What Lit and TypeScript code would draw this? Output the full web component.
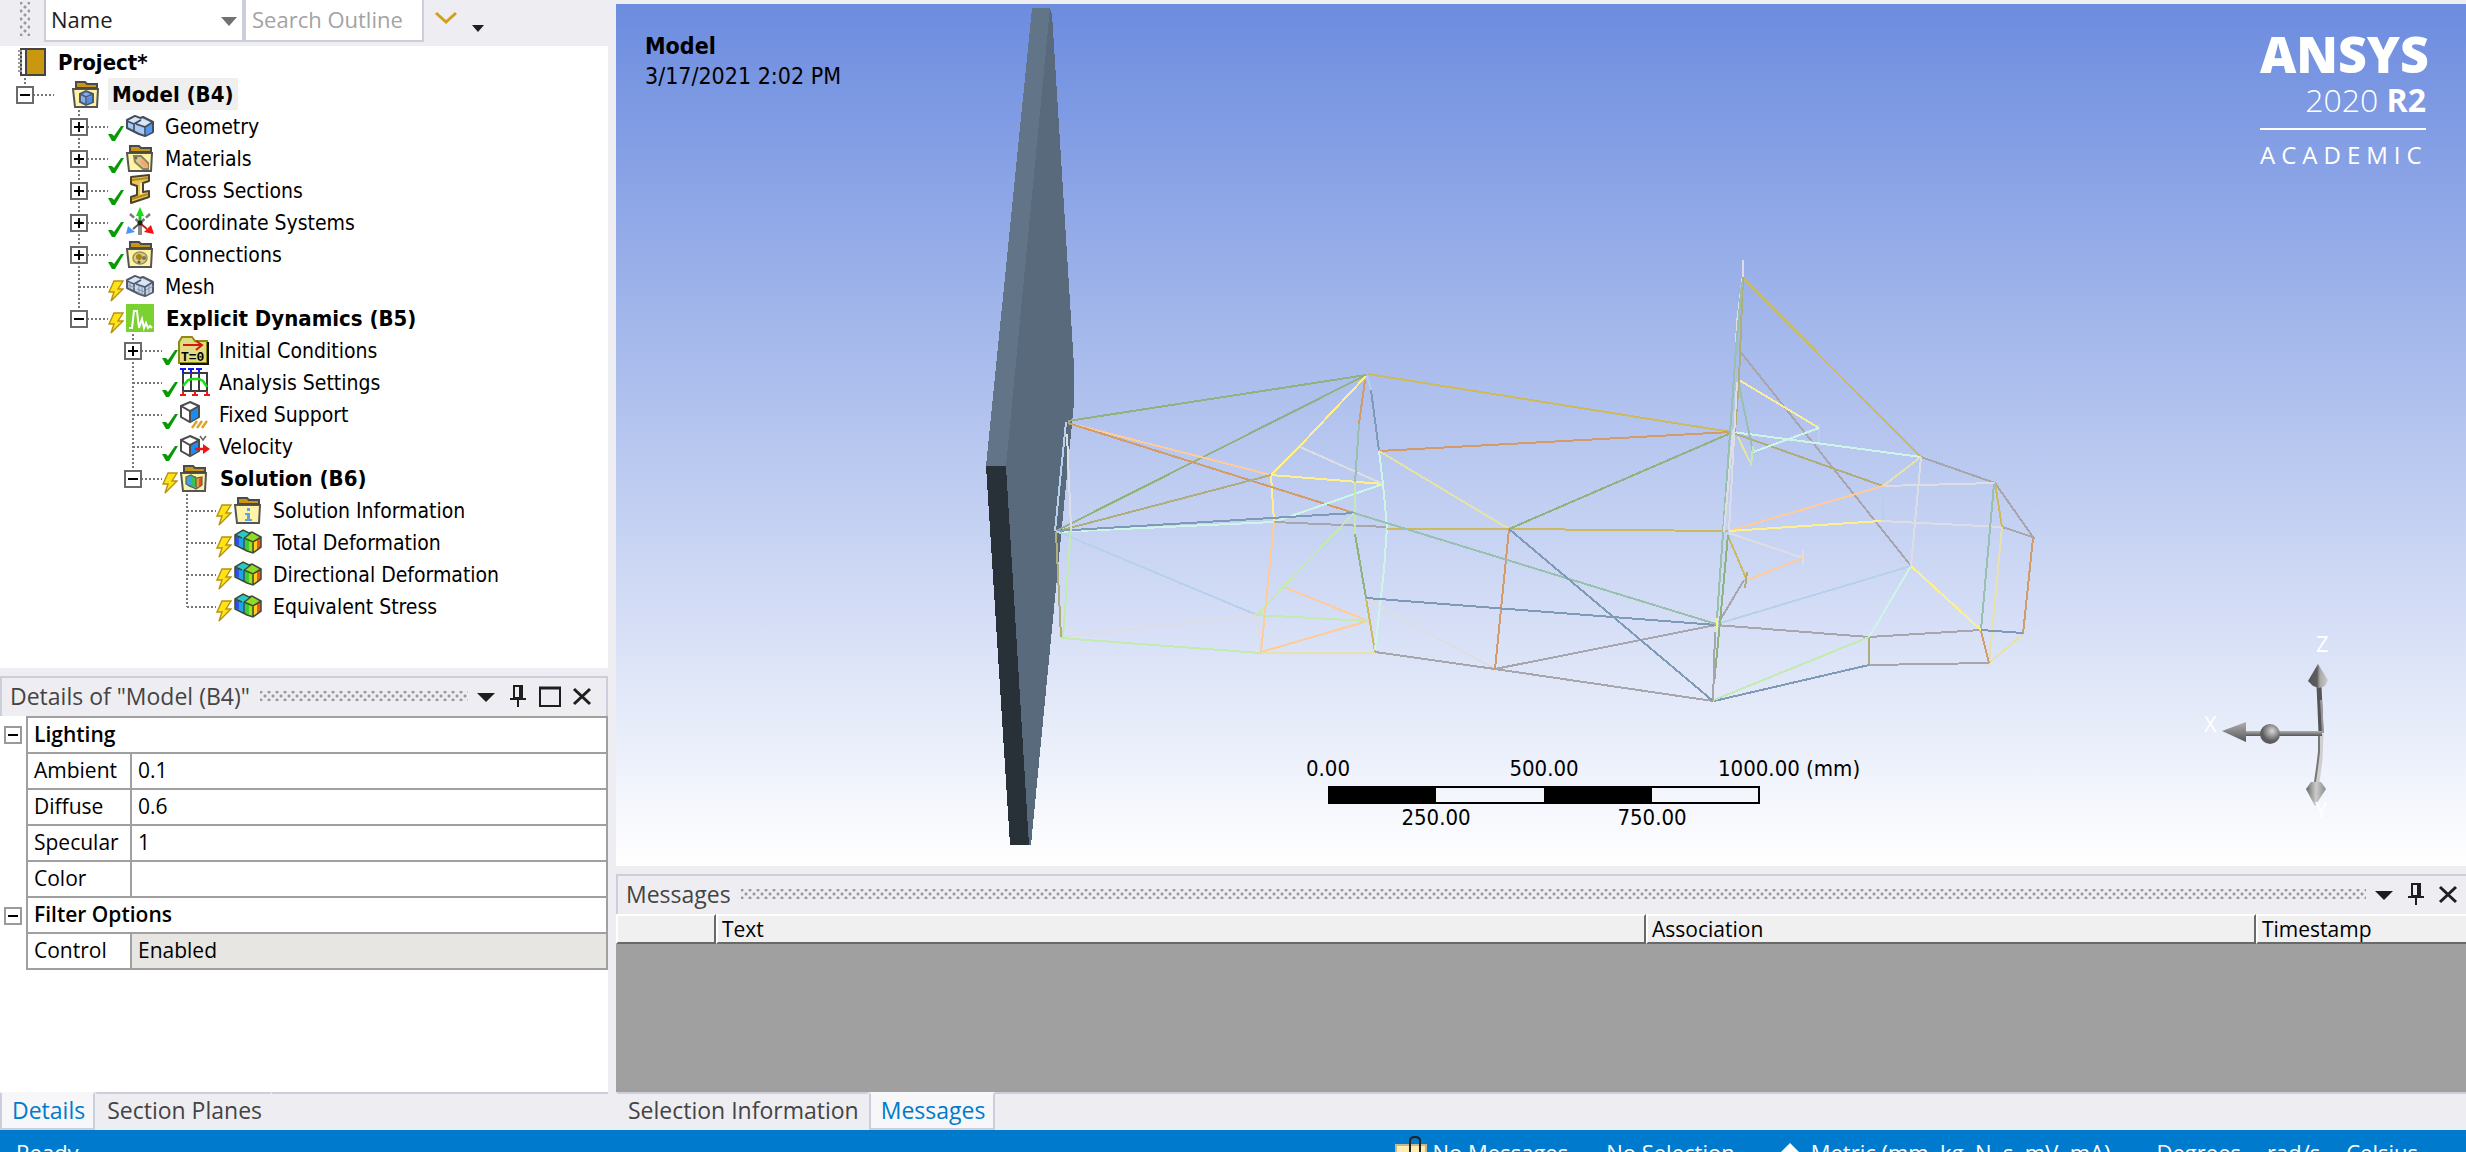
import { LitElement, html, svg, css, nothing, SVGTemplateResult } from "lit";
import { customElement, property, state } from "lit/decorators.js";
import { classMap } from "lit/directives/class-map.js";

type Status = "ok" | "pending" | "none";

interface TreeNode {
  depth: number;
  label: string;
  icon: string;
  status: Status;
  toggle?: "plus" | "minus";
  bold?: boolean;
  selected?: boolean;
  last?: boolean;
}

const NODES: TreeNode[] = [
  { depth: 0, label: "Project*", icon: "project", status: "none", bold: true },
  { depth: 1, label: "Model (B4)", icon: "model", status: "none", toggle: "minus", bold: true, selected: true, last: true },
  { depth: 2, label: "Geometry", icon: "geometry", status: "ok", toggle: "plus" },
  { depth: 2, label: "Materials", icon: "materials", status: "ok", toggle: "plus" },
  { depth: 2, label: "Cross Sections", icon: "sections", status: "ok", toggle: "plus" },
  { depth: 2, label: "Coordinate Systems", icon: "axes", status: "ok", toggle: "plus" },
  { depth: 2, label: "Connections", icon: "connections", status: "ok", toggle: "plus" },
  { depth: 2, label: "Mesh", icon: "mesh", status: "pending" },
  { depth: 2, label: "Explicit Dynamics (B5)", icon: "explicit", status: "pending", toggle: "minus", bold: true, last: true },
  { depth: 3, label: "Initial Conditions", icon: "initial", status: "ok", toggle: "plus" },
  { depth: 3, label: "Analysis Settings", icon: "analysis", status: "ok" },
  { depth: 3, label: "Fixed Support", icon: "support", status: "ok" },
  { depth: 3, label: "Velocity", icon: "velocity", status: "ok" },
  { depth: 3, label: "Solution (B6)", icon: "solution", status: "pending", toggle: "minus", bold: true, last: true },
  { depth: 4, label: "Solution Information", icon: "info", status: "pending" },
  { depth: 4, label: "Total Deformation", icon: "result", status: "pending" },
  { depth: 4, label: "Directional Deformation", icon: "result", status: "pending" },
  { depth: 4, label: "Equivalent Stress", icon: "result", status: "pending", last: true },
];

const folder = (inner: SVGTemplateResult) => svg`
  <path d="M3 11h25l-1 18H5z" fill="#fff3a6" stroke="#555" stroke-width="2"/>
  <path d="M6 10V4h9l2 2h10v4z" fill="#c9980f" stroke="#4a4a4a" stroke-width="2"/>${inner}`;

const blocks = (front: string, body: string, line: string) => svg`
  <path d="M3 10 11 6l5 2 3-1 10 5v10l-8 4-6-2-12-6z" fill="${body}" stroke="${line}" stroke-width="2" stroke-linejoin="round"/>
  <path d="M11 7l5 2-7 4-5-2z" fill="#d8e6fb"/>
  <path d="M19 9l8 4-6 3-8-3z" fill="#d8e6fb"/>
  <path d="M22 17l6-4v9l-6 3z" fill="${front}"/>
  <path d="M3 11l7 3v7M10 14l7-4M12 14l9 3 8-5M21 17v9" fill="none" stroke="${line}" stroke-width="1.6"/>`;

const cube = (dy: number) => svg`
  <g transform="translate(0 ${dy})">
    <path d="M12 4l9 4v11l-9 5-9-5V8z" fill="#fff" stroke="#4c4c4c" stroke-width="2"/>
    <path d="M13 13l7-4v10l-7 4z" fill="#1b8cf2"/>
    <path d="M3 8l9 5 9-5M12 13v10" fill="none" stroke="#4c4c4c" stroke-width="2"/>
  </g>`;

const contour = svg`
  <path d="M3 9l8-5 6 3 3-1 9 5v10l-8 6-6-2-12-6z" fill="#3cc4d8"/>
  <path d="M3 9l4 2v9l-4-2z" fill="#2a54e6"/>
  <path d="M7 11l4 1v10l-4-2z" fill="#1fa4e8"/>
  <path d="M11 4l6 3-6 4-5-2z" fill="#1fd0c0"/>
  <path d="M13 13l4 1v11l-4-2z" fill="#37d02c"/>
  <path d="M17 14l4 1v11l-4-1z" fill="#a6e01c"/>
  <path d="M20 6l9 5-8 4-8-2z" fill="#8fdc20"/>
  <path d="M22 15l3-2v11l-3 2z" fill="#ffd21c"/>
  <path d="M25 13l4-2v10l-4 3z" fill="#f8501c"/>
  <path d="M3 9l8-5 6 3 3-1 9 5v10l-8 6-6-2-12-6zM12 12v11M12 12l9 4 8-5M21 16v10M12 12l7-5M3 9l7 3" fill="none" stroke="#3f4a3a" stroke-width="1.5"/>`;

const ICONS: Record<string, SVGTemplateResult> = {
  project: svg`
    <path d="M5 3h24v26H5z" fill="#fff" stroke="#444" stroke-width="2"/>
    <path d="M10 4h18v24H10z" fill="#c9980f"/><path d="M10 3v26" stroke="#444" stroke-width="2"/>
    <path d="M4 4v24" stroke="#999" stroke-width="4" stroke-dasharray="2 2"/>`,
  model: folder(svg`
    <path d="M10 16l6-3 7 3v8l-7 3-6-3z" fill="#7db0f5" stroke="#50586a" stroke-width="2"/>
    <path d="M10 16l6 3 7-3M16 19v7" fill="none" stroke="#50586a" stroke-width="1.5"/>
    <path d="M17 20l5-2v6l-5 2z" fill="#4b8fea"/>`),
  geometry: blocks("#5097f0", "#a9c9f7", "#454c58"),
  mesh: svg`${blocks("#c4d5ee", "#c4d5ee", "#555b66")}
    <path d="M6 12v7M15 16v8M18 17v8M4 15l7 3M22 20l7-4M25 15v9M13 19l8 3" stroke="#8894a8" stroke-width="1" fill="none"/>`,
  materials: folder(svg`
    <path d="M10 14h7l7 7v6h-5l-8-7z" fill="#d9c98c" stroke="#8c8358" stroke-width="2"/>
    <path d="M16 19l3-2 5 6v3h-3l-4-4z" fill="#f7a774"/>
    <circle cx="12" cy="16" r="1.4" fill="#666"/>`),
  sections: svg`
    <path d="M7 3l18-2v6l-6 2v9l6-1v6L7 29v-6l6-2v-9L7 10z" fill="#e7c65a" stroke="#4a4330" stroke-width="2" stroke-linejoin="round"/>
    <path d="M8 6l16-2M8 25l16-5" stroke="#b98a0c" stroke-width="2"/><path d="M17 9v11" stroke="#fff0a8" stroke-width="2"/>`,
  axes: svg`
    <path d="M16 18V7" stroke="#18c418" stroke-width="3"/><path d="M16 1l4 9h-8z" fill="#12e012"/>
    <path d="M16 17L6 8M16 17l10-9" stroke="#777" stroke-width="2.5" stroke-dasharray="6 2"/>
    <path d="M16 18v11" stroke="#8a8a8a" stroke-width="4"/>
    <path d="M15 18l-6 5" stroke="#555" stroke-width="2"/><path d="M2 28l2-8 7 6z" fill="#4b95f5"/>
    <path d="M17 18l6 5" stroke="#c02020" stroke-width="2"/><path d="M30 28l-10-2 7-7z" fill="#f01414"/>
    <circle cx="16" cy="17" r="2.5" fill="#222"/>`,
  connections: folder(svg`
    <ellipse cx="16" cy="20" rx="7" ry="6" fill="#d8cd86" stroke="#999259" stroke-width="1.5"/>
    <circle cx="15" cy="19" r="3" fill="#a8811a"/><circle cx="20" cy="20" r="2" fill="#7a7550"/><circle cx="15" cy="24" r="1.5" fill="#555"/>`),
  explicit: svg`
    <path d="M2 2h28v28H2z" fill="#7bd130"/>
    <path d="M5 26h3l2-17h3l2 17 3-9 2 9 2-5 2 5 2-2 2 2" fill="none" stroke="#fff" stroke-width="2"/>`,
  initial: svg`
    <path d="M1 8l3-5h10l3 4h12v22H1z" fill="#e2dc84" stroke="#8f8a10" stroke-width="2"/>
    <path d="M30 8v22H2" fill="none" stroke="#111" stroke-width="2"/>
    <path d="M5 11h18M18 7l6 4-6 5" fill="none" stroke="#d01c10" stroke-width="2"/>
    <text x="3" y="27" font-family="Liberation Mono, monospace" font-size="13" font-weight="bold" fill="#000">T=0</text>`,
  analysis: svg`
    <path d="M5 7h24v18H5zM13 7v18M21 7v18" fill="none" stroke="#3d3d3d" stroke-width="2"/>
    <path d="M5 20l5-6 4-1h7l4 2 4 6" fill="none" stroke="#16e016" stroke-width="2.5"/>
    <path d="M2 3h6M5 3v4M10 3h6M13 3v4M18 3h6M21 3v4" stroke="#1616f0" stroke-width="2"/>
    <path d="M2 29h6M5 25v4M14 29h6M17 25v4M26 29h6M29 25v4" stroke="#f01616" stroke-width="2"/>`,
  support: svg`${cube(0)}<path d="M14 30l5-7M19 30l5-7M24 30l5-7" stroke="#d8a62c" stroke-width="2.5"/>`,
  velocity: svg`${cube(2)}<path d="M17 19h10" stroke="#f01414" stroke-width="2.5"/><path d="M25 14l7 5-7 5z" fill="#f01414"/>
    <path d="M22 6l3 4 3-4" fill="none" stroke="#666" stroke-width="1.5"/>`,
  solution: folder(svg`
    <path d="M8 15l5-2 4 3v10l-6-1-3-3z" fill="#3aa6d8"/><path d="M13 15l5-1v11l-5-2z" fill="#3cc44a"/>
    <path d="M18 16l6-1v8l-6 4z" fill="#e8a02c"/><path d="M21 17l3-2v8l-3 2z" fill="#e0502c"/>
    <path d="M8 15l5-2 5 3 6-1v8l-6 4-10-5zM18 16v10" fill="none" stroke="#5b6152" stroke-width="1.2"/>`),
  info: folder(svg`<path d="M15 14h3v3h-3zM13 19h5v6h2v2h-7v-2h2v-4h-2z" fill="#5aa2f0"/>`),
  result: contour,
};

const statusMark = (s: Status) => {
  if (s === "ok") return svg`<path d="M0 24h4l2 2 7-10h3l-9 15H4z" fill="#069a06"/>`;
  if (s === "pending")
    return svg`<path d="M6 11h9l-5 8h5L3 31l3-9H1z" fill="#ffe21a" stroke="#b8920a" stroke-width="1.4"/>`;
  return nothing;
};

// Frame members: colour, then the points of a polyline.
const GREEN = "#8fb27e", ORANGE = "#d29b68", PEACH = "#ffcb98", YELLOW = "#fff08c", GOLD = "#cdba5c";
const SLATE = "#7f9ab6", CYAN = "#cdf6e6", BLUE = "#b6d1e9", GRAY = "#a6a6ac", PALE = "#dddde4";
const LIME = "#c3ebb0", TEAL = "#98c0ae", OLIVE = "#afad7a", BEIGE = "#e7e2aa";

const BARS: [string, string][] = [
  [GREEN, "1068,421 1366,375 1056,531"],
  [YELLOW, "1366,376 1300,446 1271,475 1274,522"],
  [PEACH, "1068,423 1271,475"],
  [ORANGE, "1068,423 1354,513"],
  [OLIVE, "1062,530 1271,475"],
  [CYAN, "1056,532 1274,522 1383,484"],
  [SLATE, "1056,531 1354,513"],
  [GRAY, "1274,522 1387,527"],
  [YELLOW, "1271,475 1383,484"],
  [PALE, "1300,447 1383,484"],
  [BLUE, "1056,531 1257,615"],
  [PALE, "1061,637 1257,615 1261,652"],
  [LIME, "1061,638 1261,653"],
  [PEACH, "1274,522 1261,652 1368,621 1284,587"],
  [LIME, "1354,513 1284,586 1257,615 1368,621"],
  [BEIGE, "1261,653 1375,653"],
  [ORANGE, "1365,380 1359,424"],
  [TEAL, "1359,424 1355,482"],
  [LIME, "1355,482 1355,534"],
  [GREEN, "1355,534 1366,598"],
  [GOLD, "1366,598 1375,652"],
  [BLUE, "1367,376 1371,390"],
  [SLATE, "1371,390 1379,451"],
  [CYAN, "1379,451 1383,484 1387,527 1384,570 1375,650"],
  [GOLD, "1368,374 1731,432"],
  [ORANGE, "1379,451 1731,432"],
  [BEIGE, "1379,451 1509,529"],
  [GOLD, "1387,529 1509,529 1728,531"],
  [PALE, "1366,599 1495,669"],
  [GRAY, "1375,652 1495,669 1713,701"],
  [GRAY, "1495,669 1716,625"],
  [ORANGE, "1509,529 1495,669"],
  [SLATE, "1366,598 1716,625"],
  [TEAL, "1354,513 1716,624"],
  [GREEN, "1509,529 1731,433"],
  [SLATE, "1509,529 1713,701"],
  [BLUE, "1066,422 1055,531"],
  [OLIVE, "1056,532 1061,637"],
  [PALE, "1067,434 1071,528"],
  [LIME, "1071,528 1063,637"],
  [GOLD, "1744,279 1921,457"],
  [GRAY, "1739,350 1911,566"],
  [GRAY, "1921,457 1995,483 2033,537 2002,527"],
  [CYAN, "1733,432 1921,457"],
  [OLIVE, "1733,433 1883,486"],
  [BEIGE, "1921,457 1883,486"],
  [PALE, "1921,457 1911,566"],
  [PALE, "1883,486 1995,483"],
  [BLUE, "1883,486 1883,521"],
  [PEACH, "1883,486 1729,531"],
  [YELLOW, "1729,531 1881,521"],
  [PALE, "1881,521 2002,527"],
  [BEIGE, "2002,527 1989,663 2023,634"],
  [GOLD, "1995,483 2002,527"],
  [TEAL, "1994,484 1981,630"],
  [ORANGE, "2033,538 2023,634"],
  [GRAY, "1716,625 1869,637 1981,630"],
  [SLATE, "1981,630 2023,633"],
  [ORANGE, "1981,631 1989,663"],
  [GRAY, "1989,663 1869,665"],
  [OLIVE, "1869,637 1869,665"],
  [SLATE, "1869,665 1714,701"],
  [LIME, "1869,637 1714,700"],
  [CYAN, "1911,566 1869,637"],
  [YELLOW, "1911,566 1981,630"],
  [BLUE, "1911,566 1717,624"],
  [YELLOW, "1739,380 1819,428"],
  [BLUE, "1819,424 1819,442"],
  [CYAN, "1819,428 1753,452"],
  [TEAL, "1739,385 1753,452"],
  [LIME, "1753,446 1751,466"],
  [BEIGE, "1738,437 1750,462"],
  [PALE, "1729,533 1803,558"],
  [PALE, "1803,550 1803,566"],
  [PEACH, "1803,558 1747,580"],
  [GOLD, "1728,536 1746,578"],
  [OLIVE, "1747,572 1745,588"],
  [GRAY, "1744,580 1719,622"],
  [PALE, "1743,260 1743,274 1737,322 1736,345"],
  [OLIVE, "1743,277 1739,380 1735,432"],
  [TEAL, "1742,282 1736,348 1717,618"],
  [PALE, "1737,382 1729,530"],
  [PALE, "1733,430 1724,532"],
  [GREEN, "1728,535 1720,622 1714,684"],
  [YELLOW, "1717,618 1717,630"],
  [GRAY, "1715,632 1713,701"],
];

const panelIcons: Record<string, SVGTemplateResult> = {
  menu: svg`<path d="M3 9h18l-9 9z" fill="#1e1e1e"/>`,
  pin: svg`<path d="M8 2h8v12H8zM14 2v12M4 15h16M12 15v8" fill="none" stroke="#1e1e1e" stroke-width="2"/>`,
  maximize: svg`<path d="M2 4h20v18H2z" fill="none" stroke="#1e1e1e" stroke-width="2"/><path d="M1 4h22" stroke="#1e1e1e" stroke-width="3"/>`,
  close: svg`<path d="M4 5l16 15M20 5L4 20" fill="none" stroke="#1e1e1e" stroke-width="3"/>`,
};

const UI_FONT = css`"Open Sans", "Noto Sans", sans-serif`;

@customElement("panel-title")
class PanelTitle extends LitElement {
  @property() heading = "";
  @property({ type: Array }) actions: string[] = [];

  static styles = css`
    :host { display: block; }
    .bar { display: flex; align-items: center; height: 40px; box-sizing: border-box; border: 2px solid #cccedb; border-bottom: 0; padding: 0 8px 2px 8px; background: #eeeef2; }
    :host([flush]) .bar { border-right: 0; padding-right: 2px; }
    h2 { margin: 0; font: 23px ${UI_FONT}; line-height: 32px; color: #444; white-space: nowrap; }
    .grip { flex: 1; height: 10px; margin: 0 2px 0 10px; background-image: radial-gradient(circle, #999 1px, transparent 2px), radial-gradient(circle, #999 1px, transparent 2px); background-size: 8px 8px; background-position: -3px -3px, 1px 1px; }
    button { width: 32px; height: 32px; padding: 0; border: 0; background: none; display: grid; place-items: center; }
    svg { width: 24px; height: 24px; }
  `;

  render() {
    return html`<header class="bar">
      <h2>${this.heading}</h2>
      <div class="grip"></div>
      ${this.actions.map((a) => html`<button aria-label=${a}><svg viewBox="0 0 24 24">${panelIcons[a]}</svg></button>`)}
    </header>`;
  }
}

@customElement("tab-strip")
class TabStrip extends LitElement {
  @property({ type: Array }) tabs: string[] = [];
  @property() active = "";

  static styles = css`
    :host { display: block; }
    .strip { display: flex; height: 38px; background: #eeeef2; }
    button { box-sizing: border-box; padding: 0 8px 2px 10px; border: 2px solid transparent; border-top-color: #cccedb; background: none; font: 23px ${UI_FONT}; line-height: 32px; color: #444; white-space: nowrap; }
    .on { background: #f7f7f9; border-color: #f7f7f9 #cccedb #cccedb; color: #007acc; }
    .rest { flex: 1; border-top: 2px solid #cccedb; }
  `;

  render() {
    return html`<div class="strip" role="tablist">
      ${this.tabs.map((t) => html`<button role="tab" class=${classMap({ on: t === this.active })} @click=${() => (this.active = t)}>${t}</button>`)}
      <span class="rest"></span>
    </div>`;
  }
}

@customElement("outline-tree")
class OutlineTree extends LitElement {
  static styles = css`
    :host { display: block; background: #fff; }
    ul { margin: 0; padding: 0; list-style: none; font: 21px "DejaVu Sans Condensed", "Open Sans", sans-serif; color: #000; }
    li { display: flex; align-items: center; height: 32px; }
    .link { display: grid; width: 38px; height: 32px; }
    .link > * { grid-area: 1 / 1; }
    .lines { width: 38px; height: 32px; }
    .toggle { width: 18px; height: 18px; margin-top: 8px; padding: 0; border: 2px solid #6b6b6b; background: #fff; display: grid; place-items: center; }
    .toggle svg { width: 14px; height: 14px; }
    .mark { width: 16px; height: 32px; }
    .icon { width: 32px; height: 32px; margin-right: 6px; }
    .label { padding: 2px 4px 0 3px; line-height: 30px; white-space: nowrap; }
    .bold { font-size: 22px; font-weight: bold; padding-left: 4px; }
    .selected { background: #efefef; }
  `;

  private link(n: TreeNode) {
    const end = n.last ? (n.toggle ? 8 : 17) : 32;
    return html`<span class="link">
      <svg class="lines" viewBox="0 0 38 32" fill="none" stroke="#777" stroke-width="2" stroke-dasharray="2 2">
        <path d="M9 0V${end}M9 17H38" />
      </svg>
      ${n.toggle
        ? html`<button class="toggle" aria-label="Toggle ${n.label}">
            <svg viewBox="0 0 14 14" stroke="#000" stroke-width="2"><path d=${n.toggle === "plus" ? "M2 7h10M7 2v10" : "M2 7h10"} /></svg>
          </button>`
        : nothing}
    </span>`;
  }

  render() {
    return html`<ul role="tree">
      ${NODES.map(
        (n) => html`<li role="treeitem" style="padding-left:${16 + 54 * Math.max(0, n.depth - 1)}px">
          ${n.depth > 0 ? html`${this.link(n)}<svg class="mark" viewBox="0 0 16 32">${statusMark(n.status)}</svg>` : nothing}
          <svg class="icon" viewBox="0 0 32 32">${ICONS[n.icon]}</svg>
          <span class=${classMap({ label: true, bold: !!n.bold, selected: !!n.selected })}>${n.label}</span>
        </li>`
      )}
    </ul>`;
  }
}

interface Group { name: string; rows: { name: string; value: string; readonly?: boolean }[]; }

const DETAILS: Group[] = [
  { name: "Lighting", rows: [{ name: "Ambient", value: "0.1" }, { name: "Diffuse", value: "0.6" }, { name: "Specular", value: "1" }, { name: "Color", value: "" }] },
  { name: "Filter Options", rows: [{ name: "Control", value: "Enabled", readonly: true }] },
];

@customElement("details-grid")
class DetailsGrid extends LitElement {
  static styles = css`
    :host { display: block; background: #fff; }
    table { width: 100%; border-collapse: separate; border-spacing: 0; table-layout: fixed; font: 21px ${UI_FONT}; color: #000; }
    .c0 { width: 26px; }
    .c1 { width: 106px; }
    th, td { box-sizing: border-box; height: 36px; padding: 0 6px 2px; border: 0 solid #a0a0a0; border-width: 0 2px 2px 0; text-align: left; line-height: 32px; font-weight: normal; white-space: nowrap; }
    .gutter { padding: 0; border: 0; text-align: center; vertical-align: middle; }
    .group, .name { border-left-width: 2px; }
    .group { font-weight: 600; }
    .first .group { height: 38px; border-top-width: 2px; }
    .readonly { background: #e8e6e2; }
    button { width: 18px; height: 18px; margin: 0 auto; padding: 0; border: 2px solid #9a9a9a; background: #fff; display: grid; place-items: center; }
    svg { width: 14px; height: 14px; }
  `;

  render() {
    return html`<table>
      <colgroup><col class="c0" /><col class="c1" /><col /></colgroup>
      <tbody>
        ${DETAILS.map(
          (g, i) => html`<tr class=${classMap({ first: i === 0 })}>
              <td class="gutter"><button aria-label="Collapse ${g.name}"><svg viewBox="0 0 14 14"><path d="M2 7h10" stroke="#000" stroke-width="2" /></svg></button></td>
              <th class="group" colspan="2">${g.name}</th>
            </tr>
            ${g.rows.map(
              (r) => html`<tr>
                <td class="gutter"></td>
                <th class="name" scope="row">${r.name}</th>
                <td class=${classMap({ readonly: !!r.readonly })}>${r.value}</td>
              </tr>`
            )}`
        )}
      </tbody>
    </table>`;
  }
}

@customElement("model-view")
class ModelView extends LitElement {
  static styles = css`
    :host { display: block; position: relative; overflow: hidden; background: linear-gradient(#6c8cdf, #fff); font: 22px "DejaVu Sans Condensed", "Open Sans", sans-serif; color: #000; }
    .scene { position: absolute; inset: 0; width: 100%; height: 100%; }
    .title { position: absolute; left: 29px; top: 27px; font-size: 23px; line-height: 30px; }
    .title strong { display: block; }
    .brand { position: absolute; right: 40px; top: 20px; width: 166px; color: #fff; text-align: right; white-space: nowrap; font-family: "Open Sans", sans-serif; }
    .name { font-size: 50px; font-weight: 800; line-height: 60px; }
    .release { font-size: 32px; font-weight: 300; line-height: 32px; }
    .release b { font-weight: 700; }
    .edition { margin-top: 12px; border-top: 2px solid #fff; padding-top: 8px; font-size: 24px; line-height: 34px; letter-spacing: 6px; text-align: left; }
    .ruler { position: absolute; left: 0; right: 0; bottom: 34px; padding-left: 6px; display: flex; justify-content: center; }
    .scale { display: grid; grid-template-columns: repeat(4, 108px); line-height: 28px; }
    .tick { width: 0; display: flex; justify-content: center; white-space: nowrap; }
    .above { grid-row: 1; line-height: 34px; }
    .below { grid-row: 3; }
    .seg { grid-row: 2; height: 14px; border: 2px solid #000; border-width: 2px 0; }
    .seg.dark { background: #000; }
    .seg.end { border-right-width: 2px; }
    .t2 { grid-column: 2; } .t3 { grid-column: 3; } .t4 { grid-column: 4; }
    .t5 { grid-column: 4; justify-self: end; justify-content: flex-start; margin-right: 42px; }
    .triad { position: absolute; right: 126px; bottom: 36px; width: 140px; height: 200px; }
  `;

  render() {
    return html`
      <svg class="scene" viewBox="616 4 1850 862" role="img" aria-label="Frame model">
        <g shape-rendering="crispEdges">
          <path d="M1032 8H1050L1006 466H986z" fill="#627488" />
          <path d="M1050 8L1052 14L1074 366V403L1031 845H1029L1006 466z" fill="#596a7c" />
          <path d="M986 466H1006L1029 845H1010z" fill="#283038" />
          <g fill="none" stroke-width="2">${BARS.map(([c, p]) => svg`<polyline points=${p} stroke=${c} />`)}</g>
        </g>
      </svg>
      <div class="title"><strong>Model</strong>3/17/2021 2:02 PM</div>
      <div class="brand">
        <div class="name">ANSYS</div>
        <div class="release">2020 <b>R2</b></div>
        <div class="edition">ACADEMIC</div>
      </div>
      <div class="ruler">
        <div class="scale">
          <span class="tick above">0.00</span><span class="tick above t3">500.00</span><span class="tick above t5">1000.00 (mm)</span>
          <span class="seg dark"></span><span class="seg"></span><span class="seg dark"></span><span class="seg end"></span>
          <span class="tick below t2">250.00</span><span class="tick below t4">750.00</span>
        </div>
      </div>
      <svg class="triad" viewBox="2200 630 140 200" font-family="Open Sans, sans-serif" font-size="22" fill="#fff">
        <defs>
          <linearGradient id="cone"><stop offset="0" stop-color="#555" /><stop offset=".45" stop-color="#5c5c5c" /><stop offset=".6" stop-color="#aaa" /><stop offset="1" stop-color="#ccc" /></linearGradient>
          <linearGradient id="cone2"><stop offset="0" stop-color="#666" /><stop offset=".5" stop-color="#ccc" /><stop offset="1" stop-color="#8a8a8a" /></linearGradient>
          <linearGradient id="arm" x2="0" y2="1"><stop offset="0" stop-color="#b0b0b0" /><stop offset="1" stop-color="#555" /></linearGradient>
          <radialGradient id="ball" cx=".6" cy=".35"><stop offset="0" stop-color="#d8d8d8" /><stop offset="1" stop-color="#5c5c5c" /></radialGradient>
        </defs>
        <path d="M2319 686l1 22 1 25" fill="none" stroke="#555" stroke-width="5" />
        <path d="M2321 700l2 33" stroke="#999" stroke-width="2" />
        <path d="M2321 734l-1 25-3 24" fill="none" stroke="#cfcfcf" stroke-width="5" />
        <path d="M2319 736v16l-2 16-2 14" fill="none" stroke="#777" stroke-width="2" />
        <path d="M2246 731h76v5h-76z" fill="url(#arm)" />
        <path d="M2222 731l24-9v20z" fill="url(#arm)" />
        <circle cx="2270" cy="734" r="10" fill="url(#ball)" />
        <path d="M2318 664l-10 17 5 5 6 2 6-2 3-6z" fill="url(#cone)" />
        <path d="M2315 806l-9-17 5-7h10l5 7z" fill="url(#cone2)" />
        <text x="2316" y="652">Z</text><text x="2204" y="732">X</text><text x="2315" y="818">Y</text>
      </svg>
    `;
  }
}

@customElement("message-table")
class MessageTable extends LitElement {
  static styles = css`
    :host { display: block; background: #a0a0a0; }
    table { width: 100%; table-layout: fixed; border-collapse: separate; border-spacing: 0; font: 21px ${UI_FONT}; color: #000; }
    th { box-sizing: border-box; height: 30px; padding: 0 4px; border: 2px solid #fff; border-right-color: #696969; border-bottom-color: #696969; background: #f0f0f0; font-weight: normal; text-align: left; line-height: 26px; }
    .icon { width: 100px; } .assoc { width: 610px; } .time { width: 210px; }
    .time { border-right: 0; }
  `;

  render() {
    return html`<table><thead><tr>
      <th class="icon"></th><th>Text</th><th class="assoc">Association</th><th class="time">Timestamp</th>
    </tr></thead></table>`;
  }
}

@customElement("app-root")
class AppRoot extends LitElement {
  @state() private filter = "Name";

  static styles = css`
    :host { display: block; font: 22px ${UI_FONT}; }
    .app { display: flex; flex-direction: column; height: 100vh; overflow: hidden; background: #eeeef2; }
    .work { flex: 1; min-height: 0; display: grid; grid-template-columns: 608px minmax(0, 1fr); gap: 8px; }
    .side, .stage { display: flex; flex-direction: column; min-height: 0; }
    .stage { padding-top: 4px; }
    .tools { display: flex; align-items: flex-start; height: 46px; padding-left: 20px; box-sizing: border-box; }
    .handle { width: 10px; height: 34px; margin: 2px 14px 0 0; background-image: radial-gradient(circle, #999 1px, transparent 2px), radial-gradient(circle, #999 1px, transparent 2px); background-size: 8px 8px; background-position: -3px -3px, 1px 1px; }
    .pick { display: grid; width: 200px; }
    .pick > * { grid-area: 1 / 1; }
    .pick svg { width: 16px; height: 9px; place-self: center end; margin-right: 7px; pointer-events: none; }
    select, input { box-sizing: border-box; height: 42px; margin: 0; border: 2px solid #cccedb; border-top: 0; border-radius: 0; background: #fff; font: 22px ${UI_FONT}; color: #1e1e1e; appearance: none; outline: 0; }
    select { width: 100%; padding: 0 5px 2px; }
    input { width: 180px; padding: 0 6px 2px; }
    input::placeholder { color: #a3a3a3; opacity: 1; }
    .tool { padding: 0; border: 0; background: none; display: block; }
    .tool svg { display: block; width: 24px; height: 42px; }
    .tool.go { margin-left: 10px; }
    .tool.more { margin-left: 8px; }
    outline-tree { flex: 0 1 622px; min-height: 0; overflow: hidden; margin-bottom: 8px; }
    details-grid { flex: 1 1 376px; min-height: 0; overflow: hidden; }
    model-view { flex: 1; min-height: 0; margin-bottom: 8px; }
    message-table { height: 178px; }
    footer { flex: 0 0 22px; overflow: hidden; background: #007acc; }
    .status { display: flex; align-items: center; height: 44px; padding: 0 48px 0 16px; line-height: 44px; color: #fff; white-space: nowrap; }
    .status .ready { flex: 1; }
    .status svg { width: 32px; height: 32px; margin-right: 6px; }
    .status .up { width: 18px; height: 18px; margin-right: 12px; }
    .msg { margin-right: 38px; display: flex; align-items: center; }
    .sel { margin-right: 46px; }
    .unit { margin-right: 26px; }
    .system { margin-right: 46px; }
  `;

  render() {
    return html`<div class="app">
      <main class="work">
        <section class="side">
          <div class="tools">
            <span class="handle"></span>
            <div class="pick">
              <select aria-label="Filter by" .value=${this.filter} @change=${(e: Event) => (this.filter = (e.target as HTMLSelectElement).value)}>
                <option>Name</option>
              </select>
              <svg viewBox="0 0 16 9"><path d="M0 0h16l-8 9z" fill="#717171" /></svg>
            </div>
            <input type="text" placeholder="Search Outline" aria-label="Search Outline" />
            <button class="tool go" aria-label="Search"><svg viewBox="0 0 24 42"><path d="M2 13l10 9 10-9" fill="none" stroke="#d0a01c" stroke-width="3" /></svg></button>
            <button class="tool more" aria-label="More"><svg viewBox="0 0 24 42"><path d="M6 25h12l-6 7z" fill="#1e1e1e" /></svg></button>
          </div>
          <outline-tree></outline-tree>
          <panel-title heading='Details of "Model (B4)"' .actions=${["menu", "pin", "maximize", "close"]}></panel-title>
          <details-grid></details-grid>
          <tab-strip .tabs=${["Details", "Section Planes"]} active="Details"></tab-strip>
        </section>
        <section class="stage">
          <model-view></model-view>
          <panel-title flush heading="Messages" .actions=${["menu", "pin", "close"]}></panel-title>
          <message-table></message-table>
          <tab-strip .tabs=${["Selection Information", "Messages"]} active="Messages"></tab-strip>
        </section>
      </main>
      <footer>
        <div class="status">
          <span class="ready">Ready</span>
          <span class="msg">
            <svg viewBox="0 0 32 32"><path d="M1 9h30v22H1z" fill="#ffeeb0" stroke="#c8b890" stroke-width="2" /><path d="M15 26V5q0-4 5-4t5 4v21" fill="none" stroke="#222" stroke-width="2" /></svg>
            No Messages</span>
          <span class="sel">No Selection</span>
          <svg class="up" viewBox="0 0 18 18"><path d="M9 0l9 9H0z" fill="#fff" /></svg>
          <span class="system">Metric (mm, kg, N, s, mV, mA)</span>
          <span class="unit">Degrees</span>
          <span class="unit">rad/s</span>
          <span>Celsius</span>
        </div>
      </footer>
    </div>`;
  }
}
